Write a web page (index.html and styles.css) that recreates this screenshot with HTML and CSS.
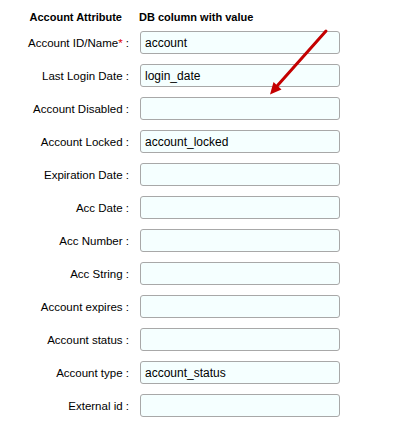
FILE: index.html
```html
<!DOCTYPE html>
<html>
<head>
<meta charset="utf-8">
<link rel="stylesheet" href="styles.css">
</head>
<body>
<div class="panel">
  <div class="head">
    <div class="h1">Account Attribute</div>
    <div class="h2">DB column with value</div>
  </div>
  <div class="rows">
    <label class="lbl">Account ID/Name<span class="req">*</span> :</label><input class="fld" type="text" value="account">
    <label class="lbl">Last Login Date :</label><input class="fld" type="text" value="login_date">
    <label class="lbl">Account Disabled :</label><input class="fld" type="text" value="">
    <label class="lbl">Account Locked :</label><input class="fld" type="text" value="account_locked">
    <label class="lbl">Expiration Date :</label><input class="fld" type="text" value="">
    <label class="lbl">Acc Date :</label><input class="fld" type="text" value="">
    <label class="lbl">Acc Number :</label><input class="fld" type="text" value="">
    <label class="lbl">Acc String :</label><input class="fld" type="text" value="">
    <label class="lbl">Account expires :</label><input class="fld" type="text" value="">
    <label class="lbl">Account status :</label><input class="fld" type="text" value="">
    <label class="lbl">Account type :</label><input class="fld" type="text" value="account_status">
    <label class="lbl">External id :</label><input class="fld" type="text" value="">
  </div>
  <svg class="arrow" width="406" height="422" viewBox="0 0 406 422">
    <line x1="326" y1="31" x2="277.5" y2="85.5" stroke="#c40000" stroke-width="3" stroke-linecap="round"/>
    <polygon points="270,94.5 281.5,89.5 273.5,82" fill="#c40000"/>
  </svg>
</div>
</body>
</html>
```

FILE: styles.css
```css
html, body {
  margin: 0;
  padding: 0;
  background: #ffffff;
}
.panel {
  position: relative;
  width: 406px;
  height: 422px;
  padding-top: 10px;
  box-sizing: border-box;
  font-family: "Liberation Sans", Arial, sans-serif;
  font-size: 11px;
  color: #000;
}
.head {
  display: grid;
  grid-template-columns: 130px 200px;
  column-gap: 10px;
  height: 14px;
  line-height: 14px;
  margin-bottom: 7px;
  font-weight: bold;
}
.h1 {
  text-align: right;
  padding-right: 8px;
}
.h2 {
  margin-left: -1px;
  white-space: nowrap;
}
.rows {
  display: grid;
  grid-template-columns: 130px 200px;
  column-gap: 10px;
  row-gap: 10px;
  align-items: center;
}
.lbl {
  text-align: right;
  white-space: nowrap;
  padding-right: 1px;
  font-size: 11.5px;
  padding-top: 1px;
}
.req {
  color: #e00000;
}
.fld {
  box-sizing: border-box;
  width: 200px;
  height: 23px;
  margin: 0;
  padding: 0 4px;
  border: 1px solid #a8a8a8;
  border-radius: 3px;
  background: #f5ffff;
  font-family: "Liberation Sans", Arial, sans-serif;
  font-size: 12px;
  color: #000;
  outline: none;
}
.arrow {
  position: absolute;
  left: 0;
  top: 0;
  pointer-events: none;
}
```
